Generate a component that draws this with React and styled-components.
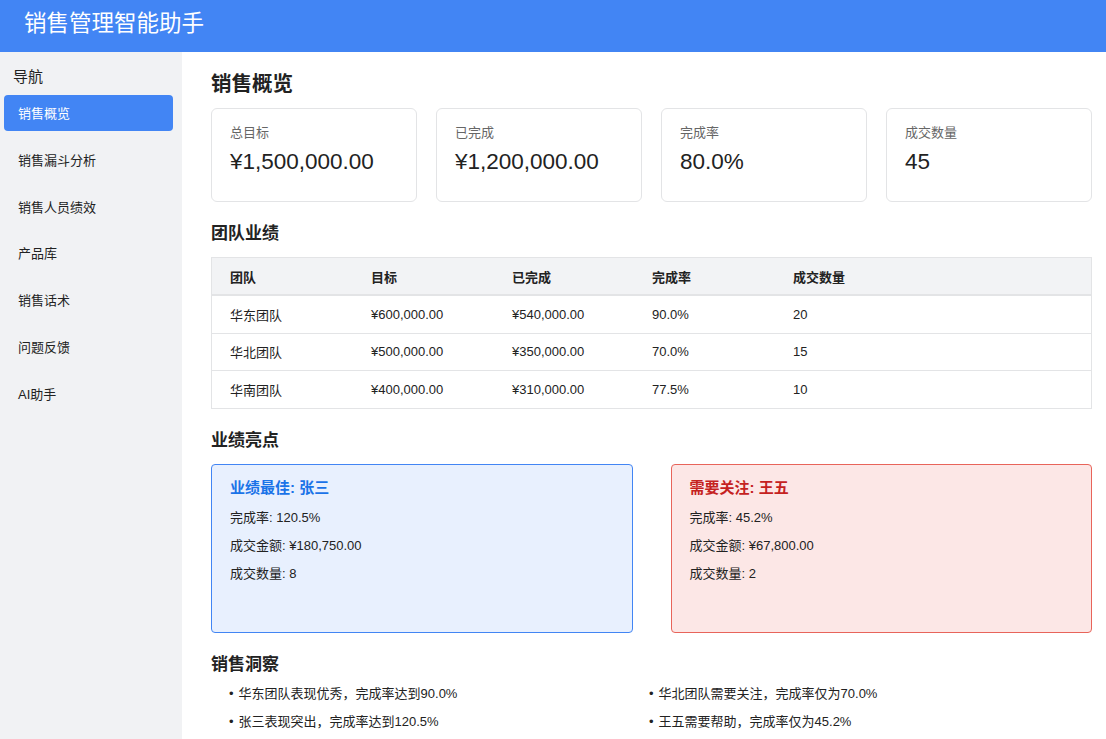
import React from 'react'
import styled, { createGlobalStyle } from 'styled-components'

const navItems = ['销售概览', '销售漏斗分析', '销售人员绩效', '产品库', '销售话术', '问题反馈', 'AI助手']

const stats = [
  { label: '总目标', value: '¥1,500,000.00' },
  { label: '已完成', value: '¥1,200,000.00' },
  { label: '完成率', value: '80.0%' },
  { label: '成交数量', value: '45' },
]

const teams = [
  ['华东团队', '¥600,000.00', '¥540,000.00', '90.0%', '20'],
  ['华北团队', '¥500,000.00', '¥350,000.00', '70.0%', '15'],
  ['华南团队', '¥400,000.00', '¥310,000.00', '77.5%', '10'],
]

const highlights = [
  { tone: 'good', title: '业绩最佳: 张三', lines: ['完成率: 120.5%', '成交金额: ¥180,750.00', '成交数量: 8'] },
  { tone: 'bad', title: '需要关注: 王五', lines: ['完成率: 45.2%', '成交金额: ¥67,800.00', '成交数量: 2'] },
]

const insights = [
  '华东团队表现优秀，完成率达到90.0%',
  '华北团队需要关注，完成率仅为70.0%',
  '张三表现突出，完成率达到120.5%',
  '王五需要帮助，完成率仅为45.2%',
]

const App = () => {
  return (
    <>
      <GlobalStyle />
      <Page>
        <Header>销售管理智能助手</Header>
        <Body>
          <Sidebar>
            <NavTitle>导航</NavTitle>
            {navItems.map((item, i) => (
              <NavItem key={item} $active={i === 0}>{item}</NavItem>
            ))}
          </Sidebar>
          <Main>
            <PageTitle>销售概览</PageTitle>
            <StatGrid>
              {stats.map(s => (
                <StatCard key={s.label}>
                  <StatLabel>{s.label}</StatLabel>
                  <StatValue>{s.value}</StatValue>
                </StatCard>
              ))}
            </StatGrid>

            <SectionTitle>团队业绩</SectionTitle>
            <Table>
              <Row $head>
                {['团队', '目标', '已完成', '完成率', '成交数量'].map(h => (
                  <Cell key={h} $head>{h}</Cell>
                ))}
              </Row>
              {teams.map(row => (
                <Row key={row[0]}>
                  {row.map((c, i) => <Cell key={i}>{c}</Cell>)}
                </Row>
              ))}
            </Table>

            <SectionTitle>业绩亮点</SectionTitle>
            <HighlightGrid>
              {highlights.map(h => (
                <HighlightCard key={h.title} $tone={h.tone}>
                  <HighlightTitle $tone={h.tone}>{h.title}</HighlightTitle>
                  {h.lines.map(l => <HighlightLine key={l}>{l}</HighlightLine>)}
                </HighlightCard>
              ))}
            </HighlightGrid>

            <SectionTitle $tight>销售洞察</SectionTitle>
            <InsightList>
              {insights.map(t => <Insight key={t}>{t}</Insight>)}
            </InsightList>
          </Main>
        </Body>
      </Page>
    </>
  )
}

export default App

const GlobalStyle = createGlobalStyle`
  body {
    margin: 0;
    font-family: "Liberation Sans", "Noto Sans CJK SC", sans-serif;
    color: #222;
    background: #fff;
  }
`

const Page = styled.div`
  width: 1106px;
  height: 739px;
  overflow: hidden;
  display: flex;
  flex-direction: column;
`

const Header = styled.div`
  height: 52px;
  flex-shrink: 0;
  background: #4285f4;
  color: #fff;
  font-size: 22.5px;
  line-height: 48px;
  padding-left: 24px;
`

const Body = styled.div`
  flex: 1;
  display: flex;
  min-height: 0;
`

const Sidebar = styled.div`
  width: 182px;
  flex-shrink: 0;
  background: #f1f2f4;
  padding: 13px 9px 0 4px;
  box-sizing: border-box;
`

const NavTitle = styled.div`
  font-size: 15px;
  color: #222;
  padding-left: 9px;
  height: 30px;
`

const NavItem = styled.div`
  height: 36px;
  line-height: 37px;
  padding-left: 14px;
  margin-bottom: 10.8px;
  border-radius: 4px;
  font-size: 13px;
  background: ${p => (p.$active ? '#4285f4' : 'transparent')};
  color: ${p => (p.$active ? '#fff' : '#222')};
`

const Main = styled.div`
  flex: 1;
  padding: 18px 14px 0 29px;
  box-sizing: border-box;
`

const PageTitle = styled.div`
  font-size: 20.5px;
  font-weight: bold;
  height: 38px;
  line-height: 28px;
`

const StatGrid = styled.div`
  display: grid;
  grid-template-columns: repeat(4, 1fr);
  gap: 19px;
`

const StatCard = styled.div`
  height: 94px;
  box-sizing: border-box;
  border: 1px solid #e3e4e6;
  border-radius: 6px;
  padding: 15px 18px;
`

const StatLabel = styled.div`
  font-size: 13px;
  color: #666;
  line-height: 17px;
`

const StatValue = styled.div`
  font-size: 22.5px;
  color: #222;
  margin-top: 7px;
  line-height: 28px;
`

const SectionTitle = styled.div`
  font-size: 17px;
  font-weight: bold;
  margin-top: 21px;
  line-height: 22px;
  margin-bottom: ${p => (p.$tight ? '4px' : '12px')};
`

const Table = styled.div`
  border: 1px solid #e3e4e6;
  border-bottom-width: 0;
`

const Row = styled.div`
  display: grid;
  grid-template-columns: 141px 141px 140px 141px 1fr;
  height: ${p => (p.$head ? '36px' : '36.5px')};
  background: ${p => (p.$head ? '#f2f3f5' : '#fff')};
  border-bottom: ${p => (p.$head ? '2px' : '1px')} solid #e3e4e6;
  align-items: center;
`

const Cell = styled.div`
  padding-left: 18px;
  font-size: 13px;
  font-weight: ${p => (p.$head ? 'bold' : 'normal')};
  color: #222;
`

const HighlightGrid = styled.div`
  display: grid;
  grid-template-columns: 1fr 1fr;
  gap: 38px;
`

const HighlightCard = styled.div`
  height: 169px;
  box-sizing: border-box;
  border-radius: 4px;
  padding: 13px 18px;
  border: 1px solid ${p => (p.$tone === 'good' ? '#4285f4' : '#e8645a')};
  background: ${p => (p.$tone === 'good' ? '#e8f0fe' : '#fce7e6')};
`

const HighlightTitle = styled.div`
  font-size: 15px;
  font-weight: bold;
  line-height: 20px;
  margin-bottom: 6px;
  color: ${p => (p.$tone === 'good' ? '#1a73e8' : '#c5221f')};
`

const HighlightLine = styled.div`
  font-size: 13px;
  line-height: 28px;
`

const InsightList = styled.ul`
  list-style: none;
  margin: 0;
  padding: 0 0 0 18px;
  display: grid;
  grid-template-columns: 420px 1fr;
  grid-auto-rows: 28px;
`

const Insight = styled.li`
  font-size: 13px;
  line-height: 28px;
  &::before {
    content: '•';
    margin-right: 5px;
  }
`
